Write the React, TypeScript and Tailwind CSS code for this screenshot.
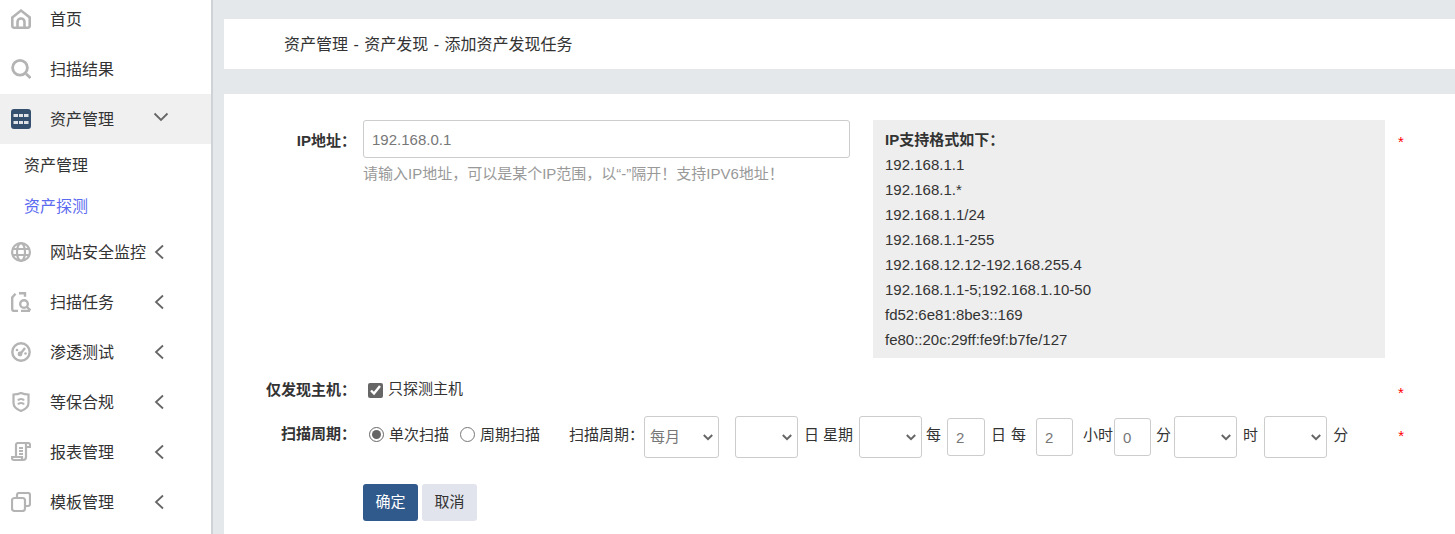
const F = "font-['Liberation_Sans','Noto_Sans_CJK_SC',sans-serif]";

const Chevron = ({ open }: { open?: boolean }) => (
  <svg width="16" height="16" viewBox="0 0 16 16" fill="none" stroke="#666" strokeWidth="1.8">
    {open ? <path d="M1.500 4.500l6.500 6.500 6.500-6.500" /> : <path d="M11 1.500L4 8l7 6.500" />}
  </svg>
);

const g = "#b4b4b4";
const icons: Record<string, JSX.Element> = {
  home: (
    <svg width="20" height="20" viewBox="0 0 20 20" fill="none" stroke={g} strokeWidth="2.600">
      <path d="M1.300 8.500L10 1.600l8.700 6.900V17a1.700 1.700 0 0 1-1.700 1.700H3A1.700 1.700 0 0 1 1.300 17z" />
      <path d="M6.500 18.500V13a3.500 3.500 0 0 1 7 0v5.500" />
    </svg>
  ),
  search: (
    <svg width="20" height="20" viewBox="0 0 20 20" fill="none" stroke={g} strokeWidth="2.800">
      <circle cx="9" cy="8.800" r="7.400" />
      <path d="M15 14.800l4.500 4.200" />
    </svg>
  ),
  asset: (
    <svg width="20" height="20" viewBox="0 0 20 20">
      <rect x="0" y="0" width="20" height="20" rx="3" fill="#35506f" />
      <path d="M2.500 5h15v3h-15zM2.500 12h15v3h-15z" fill="#dfe3e8" />
      <path d="M7.500 4.500v4M12.500 4.500v4M7.500 11.500v4M12.500 11.500v4" stroke="#35506f" strokeWidth="1" />
    </svg>
  ),
  globe: (
    <svg width="20" height="20" viewBox="0 0 20 20" fill="none" stroke={g} strokeWidth="2.200">
      <circle cx="10" cy="10" r="8.900" />
      <ellipse cx="10" cy="10" rx="4" ry="8.900" />
      <path d="M1 7h18M1 13h18" />
    </svg>
  ),
  task: (
    <svg width="20" height="20" viewBox="0 0 20 20" fill="none" stroke={g} strokeWidth="2.400">
      <path d="M8 1.200h6v3.500M4.500 1.800L1.200 5.500V17a2 2 0 0 0 2 2H7" />
      <circle cx="13" cy="12" r="3.800" />
      <path d="M16 15l3.500 3.500M10 19h9" />
    </svg>
  ),
  pen: (
    <svg width="20" height="20" viewBox="0 0 20 20" fill="none" stroke={g} strokeWidth="2.400">
      <circle cx="10" cy="10" r="8.700" />
      <circle cx="9" cy="12" r="2.400" fill={g} stroke="none" />
      <path d="M10 11L14 6" strokeWidth="2.400" />
      <circle cx="6" cy="8" r="1.300" fill={g} stroke="none" />
      <circle cx="14.500" cy="11.500" r="1.300" fill={g} stroke="none" />
    </svg>
  ),
  shield: (
    <svg width="20" height="20" viewBox="0 0 20 20" fill="none" stroke={g} strokeWidth="2.200">
      <path d="M2.500 2.500c3 0 5-.4 7.500-1.500 2.500 1.100 4.500 1.500 7.500 1.500V11c0 4-3.500 6.500-7.500 8-4-1.500-7.500-4-7.500-8z" />
      <path d="M7 8.500c1-2 5-2 6 0M7 12.500c1-2 5-2 6 0" />
    </svg>
  ),
  report: (
    <svg width="20" height="20" viewBox="0 0 20 20" fill="none" stroke={g} strokeWidth="2.200">
      <path d="M5 15V3a2 2 0 0 1 2-2h10a2 2 0 0 1 2 2v2h-4M15 1v14a3 3 0 0 1-3 3H3a2 2 0 0 1-2-2v-1h10v2" />
      <path d="M8 6h4M8 9h4M8 12h4" />
    </svg>
  ),
  tpl: (
    <svg width="20" height="20" viewBox="0 0 20 20" fill="none" stroke={g} strokeWidth="2.200">
      <rect x="1" y="6" width="13" height="13" rx="2.500" />
      <path d="M6 6V3a2 2 0 0 1 2-2h9a2 2 0 0 1 2 2v9a2 2 0 0 1-2 2h-3" />
    </svg>
  ),
};

const NavRow = ({ icon, label, chev, active }: { icon: string; label: string; chev?: "left" | "down"; active?: boolean }) => (
  <div className={`flex h-[50px] items-center pl-[11px] ${active ? "bg-[#f0f0f0]" : ""}`}>
    <span className="flex w-[20px] justify-center">{icons[icon]}</span>
    <span className="ml-[19px] w-[105px] whitespace-nowrap pt-[2px] text-[16px] text-[#333]">{label}</span>
    {chev === "left" && <span className="ml-[-3px]"><Chevron /></span>}
    {chev === "down" && <span className="-mt-[5px] ml-[-2px]"><Chevron open /></span>}
  </div>
);

const Sel = ({ w, v, cls }: { w: string; v?: string; cls?: string }) => (
  <span className={`relative inline-flex ${cls ?? ""}`}>
    <select className={`h-[42px] appearance-none rounded-[3px] border border-[#ccc] bg-white pl-[5px] text-[15px] text-[#777] ${w}`} defaultValue={v ?? ""}>
      <option value="">{""}</option>
      <option value="每月">每月</option>
    </select>
    <svg className="pointer-events-none absolute right-[6px] top-[18px]" width="10" height="7" viewBox="0 0 10 7" fill="none" stroke="#666" strokeWidth="2">
      <path d="M0.800 1l4.200 4.200L9.200 1" />
    </svg>
  </span>
);

const Num = ({ w, v, cls }: { w: string; v: string; cls?: string }) => (
  <input readOnly value={v} className={`h-[38px] rounded-[3px] border border-[#ccc] bg-white px-[8px] text-[15px] text-[#777] ${w} ${cls ?? ""}`} />
);

const Star = ({ cls }: { cls: string }) => <span className={`text-[15px] text-[#f00] ${cls}`}>*</span>;

const formats = [
  "192.168.1.1",
  "192.168.1.*",
  "192.168.1.1/24",
  "192.168.1.1-255",
  "192.168.12.12-192.168.255.4",
  "192.168.1.1-5;192.168.1.10-50",
  "fd52:6e81:8be3::169",
  "fe80::20c:29ff:fe9f:b7fe/127",
];

export default function App() {
  return (
    <div className={`${F} flex h-[534px] w-[1455px] overflow-hidden bg-white text-[15px] text-[#333]`}>
      <aside className="z-10 h-full w-[213px] shrink-0 overflow-hidden border-r-2 border-[#cfd2d6] bg-white">
        <div className="-mt-[6px]">
          <NavRow icon="home" label="首页" />
          <NavRow icon="search" label="扫描结果" />
          <NavRow icon="asset" label="资产管理" chev="down" active />
          <div className="flex h-[42px] items-center pl-[24px] pt-[2px] text-[16px] text-[#333]">资产管理</div>
          <div className="flex h-[41px] items-center pl-[24px] text-[16px] text-[#5b6af0]">资产探测</div>
          <NavRow icon="globe" label="网站安全监控" chev="left" />
          <NavRow icon="task" label="扫描任务" chev="left" />
          <NavRow icon="pen" label="渗透测试" chev="left" />
          <NavRow icon="shield" label="等保合规" chev="left" />
          <NavRow icon="report" label="报表管理" chev="left" />
          <NavRow icon="tpl" label="模板管理" chev="left" />
        </div>
      </aside>
      <main className="flex-1 bg-[#e4e8eb] pl-[11px] pt-[19px]">
        <div className="flex h-[50px] items-center bg-white pl-[60px] pt-[1px] text-[16px] text-[#333] [word-spacing:1px]">资产管理 - 资产发现 - 添加资产发现任务</div>
        <div className="mt-[25px] h-[440px] bg-white pt-[26px]">
          <div className="flex">
            <label className="mt-[10px] w-[132px] text-right font-bold text-[#333]">IP地址：</label>
            <div className="ml-[7px] w-[487px]">
              <input readOnly value="192.168.0.1" className="h-[38px] w-full rounded-[3px] border border-[#ccc] bg-white px-[8px] text-[15px] text-[#777]" />
              <p className="mt-[6px] whitespace-nowrap text-[15px] leading-[20px] text-[#999]">请输入IP地址，可以是某个IP范围，以“-”隔开！支持IPV6地址！</p>
            </div>
            <div className="ml-[23px] h-[238px] w-[512px] bg-[#eeeeee] pl-[12px] pt-[7px] text-[15px] leading-[25px] text-[#333]">
              <div className="font-bold">IP支持格式如下：</div>
              {formats.map((f) => (
                <div key={f}>{f}</div>
              ))}
            </div>
            <Star cls="ml-[13px] mt-[11px]" />
          </div>

          <div className="mt-[22px] flex h-[20px] items-center">
            <label className="w-[132px] text-right font-bold text-[#333]">仅发现主机：</label>
            <input type="checkbox" defaultChecked className="ml-[12px] h-[15px] w-[15px] accent-[#666]" />
            <span className="ml-[5px] w-[75px] -translate-y-[1px]">只探测主机</span>
            <Star cls="ml-[935px] mt-[6px]" />
          </div>

          <div className="mt-[16px] flex h-[42px] items-center whitespace-nowrap">
            <label className="-mt-[6px] w-[132px] text-right font-bold text-[#333]">扫描周期：</label>
            <input type="radio" name="c" defaultChecked className="ml-[13px] -mt-[6px] h-[15px] w-[15px] accent-[#666]" />
            <span className="ml-[5px] -mt-[3px] w-[60px]">单次扫描</span>
            <input type="radio" name="c" className="ml-[11px] -mt-[6px] h-[15px] w-[15px] accent-[#666]" />
            <span className="ml-[5px] -mt-[3px] w-[60px]">周期扫描</span>
            <span className="ml-[29px] -mt-[3px] w-[75px]">扫描周期：</span>
            <Sel w="w-[75px]" v="每月" />
            <Sel w="w-[63px]" cls="ml-[16px]" />
            <span className="ml-[6px] -mt-[3px]">日</span>
            <span className="ml-[4px] -mt-[3px]">星期</span>
            <Sel w="w-[63px]" cls="ml-[6px]" />
            <span className="ml-[4px] -mt-[3px]">每</span>
            <Num w="w-[38px]" v="2" cls="ml-[6px]" />
            <span className="ml-[6px] -mt-[3px]">日</span>
            <span className="ml-[5px] -mt-[3px]">每</span>
            <Num w="w-[37px]" v="2" cls="ml-[10px]" />
            <span className="ml-[10px] -mt-[3px]">小时</span>
            <Num w="w-[37px]" v="0" cls="ml-[1px]" />
            <span className="ml-[5px] -mt-[3px]">分</span>
            <Sel w="w-[63px]" cls="ml-[3px]" />
            <span className="ml-[6px] -mt-[3px]">时</span>
            <Sel w="w-[63px]" cls="ml-[6px]" />
            <span className="ml-[6px] -mt-[3px]">分</span>
            <Star cls="ml-[50px] -mt-[2px]" />
          </div>

          <div className="ml-[139px] mt-[26px] flex gap-[4px]">
            <button className="h-[37px] w-[55px] rounded-[3px] bg-[#30598c] text-[15px] text-white">确定</button>
            <button className="h-[37px] w-[55px] rounded-[3px] bg-[#e1e4ec] text-[15px] text-[#333]">取消</button>
          </div>
        </div>
      </main>
    </div>
  );
}
